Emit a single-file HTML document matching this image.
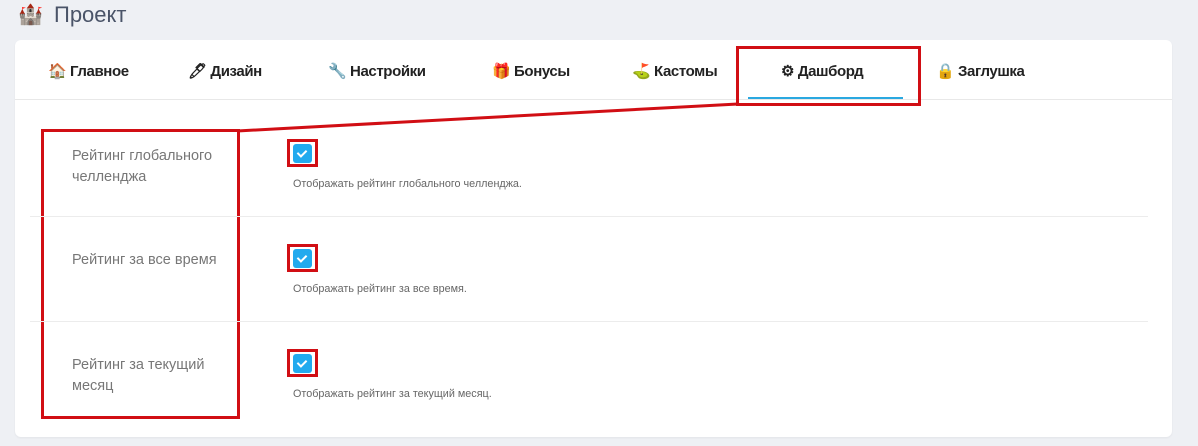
<!DOCTYPE html>
<html><head><meta charset="utf-8"><style>
body{margin:0;width:1198px;height:446px;background:#eef0f4;font-family:"Liberation Sans","Noto Sans CJK SC",sans-serif;position:relative;overflow:hidden}
.a{position:absolute}
.card{left:15px;top:40px;width:1157px;height:397px;background:#fff;border-radius:6px;box-shadow:0 1px 2px rgba(0,0,0,.05)}
.tab{top:62px;font-size:15px;color:#222;font-weight:bold;letter-spacing:-0.4px}
.lbl{left:72px;font-size:14.5px;color:#777;line-height:21px}
.desc{left:293px;font-size:10.8px;color:#666}
.cb{width:19px;height:19px;background:#22aaee;border-radius:3px}
.cb::after{content:"";position:absolute;left:6px;top:4px;width:4px;height:7px;border:solid #fff;border-width:0 2px 2px 0;transform:rotate(45deg)}
.rb{border:3px solid #d10e14;box-sizing:border-box}
.sep{left:30px;width:1118px;height:1px;background:#ececec}
</style></head><body>
<div class="a" style="left:18px;top:2px;font-size:20px">🏰</div>
<div class="a" style="left:54px;top:2px;font-size:22px;color:#4a5468">Проект</div>
<div class="a card"></div>
<div class="a" style="left:15px;top:99px;width:1157px;height:1px;background:#e8e8e8"></div>
<div class="a tab" style="left:48px">🏠 Главное</div>
<div class="a tab" style="left:188px">🖊 Дизайн</div>
<div class="a tab" style="left:328px">🔧 Настройки</div>
<div class="a tab" style="left:492px">🎁 Бонусы</div>
<div class="a tab" style="left:632px">⛳ Кастомы</div>
<div class="a tab" style="left:781px">⚙ Дашборд</div>
<div class="a tab" style="left:936px">🔒 Заглушка</div>
<div class="a" style="left:748px;top:97px;width:155px;height:2px;background:#2aa8e0"></div>
<div class="a rb" style="left:736px;top:46px;width:185px;height:60px"></div>
<svg class="a" style="left:0;top:0" width="1198" height="446"><line x1="237" y1="131" x2="738" y2="104" stroke="#d10e14" stroke-width="3"/></svg>
<div class="a rb" style="left:41px;top:129px;width:199px;height:290px"></div>
<div class="a sep" style="top:216px"></div>
<div class="a sep" style="top:321px"></div>
<div class="a lbl" style="top:146px">Рейтинг глобального<br>челленджа</div>
<div class="a lbl" style="top:250px">Рейтинг за все время</div>
<div class="a lbl" style="top:355px">Рейтинг за текущий<br>месяц</div>
<div class="a rb" style="left:287px;top:139px;width:31px;height:28px"></div>
<div class="a rb" style="left:287px;top:244px;width:31px;height:28px"></div>
<div class="a rb" style="left:287px;top:349px;width:31px;height:28px"></div>
<div class="a cb" style="left:293px;top:144px"></div>
<div class="a cb" style="left:293px;top:249px"></div>
<div class="a cb" style="left:293px;top:354px"></div>
<div class="a desc" style="top:178px">Отображать рейтинг глобального челленджа.</div>
<div class="a desc" style="top:283px">Отображать рейтинг за все время.</div>
<div class="a desc" style="top:388px">Отображать рейтинг за текущий месяц.</div>
</body></html>
